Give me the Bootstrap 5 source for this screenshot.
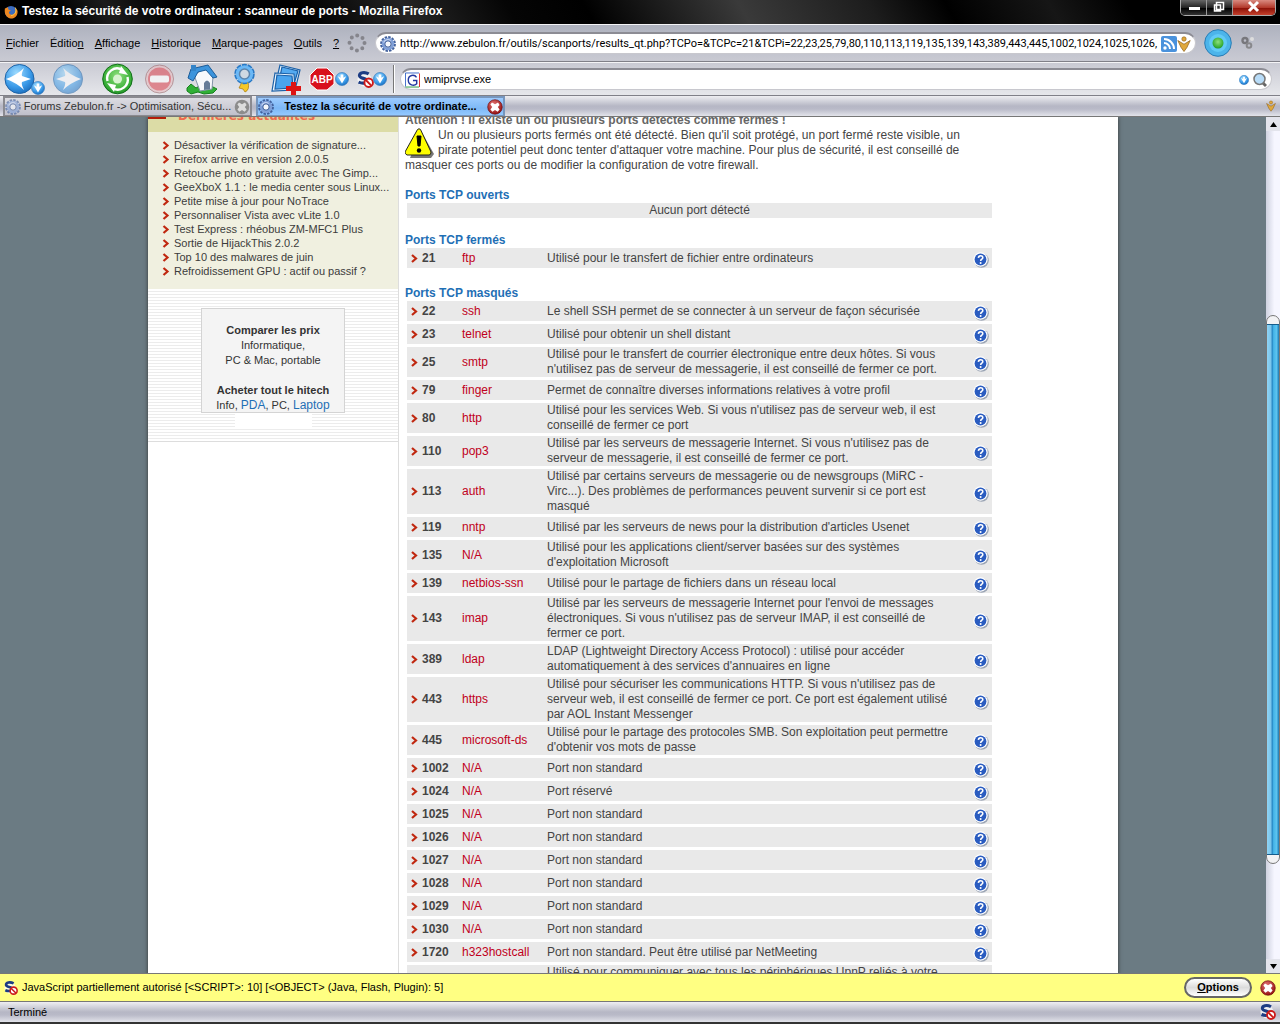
<!DOCTYPE html>
<html lang="fr">
<head>
<meta charset="utf-8">
<meta name="viewport" content="width=device-width, initial-scale=1">
<title>Testez la sécurité de votre ordinateur : scanneur de ports</title>
<link href="https://cdn.jsdelivr.net/npm/bootstrap@5.3.0/dist/css/bootstrap.min.css" rel="stylesheet">
<style>
body{font-family:"Liberation Sans",Arial,sans-serif;font-size:11px;line-height:15px;color:#000;background:#6b7b83}
a{color:inherit;text-decoration:none}
svg{flex:none;display:block}
.titlebar{height:24px;background:linear-gradient(60deg,#000 0 5%,#1c1c1c 9%,#000 14% 24%,#242424 32%,#050505 40%,#000 46%,#3a3a3a 58%,#1d1d1d 68%,#000 74%,#161616 82%,#000 88%);color:#fff;font-size:12px;font-weight:bold}
.winbtns{height:16px;border:1px solid #aaa;border-top:0;border-radius:0 0 5px 5px;overflow:hidden}
.winbtns button{border:0;border-right:1px solid #999;background:linear-gradient(#666,#222 50%,#000 55%,#333);width:26px;padding:0}
.winbtns .closer{width:42px;border:0;background:linear-gradient(#d98a80,#b33a2c 50%,#8c1208 55%,#c4402c)}
.menubar{height:38px;border-top:1px solid #f4f4f6;border-bottom:1px solid #808088;background:linear-gradient(#aeb2be,#bfc1cc 60%,#c9cad3)}
.menus{gap:11px;padding-left:6px}
.fieldbox{border-radius:11px;background:#fff;border:1px solid #c8c8ce;border-top:2px solid #8c8c94;height:22px;color:#000}
.fieldbox input{border:0;outline:0;background:transparent;min-width:0;padding:0;font-size:11px;line-height:15px;color:#000}
.fieldbox .urltext{font-family:Roboto,"Liberation Sans",sans-serif}
.toolbar{height:34px;border-top:1px solid #f4f4f6;border-bottom:1px solid #808088;background:linear-gradient(#c9cad3,#e6e7eb)}
.tabstrip{height:21px;padding-left:3px;border-bottom:1px solid #777;background:linear-gradient(#eeeef2,#b6b7c5 50%,#b9bac8 65%,#e2e3ea)}
.tabitem{height:20px;width:249px;border:2px solid #8a8a90;border-bottom-width:1px;background:linear-gradient(#dcdce2,#c0c0ca);color:#333;white-space:nowrap}
.tabitem.current{background:linear-gradient(#9ccbff,#7db8f6 60%,#93c9ff);border-color:#7796bd;color:#000;font-weight:bold}
.view{min-height:0;overflow:hidden}
.sheet{width:970px;background:#fff;box-shadow:0 0 4px #333}
.side{width:251px;border-right:1px solid #ddd}
.sidehead{height:15px;background:#dcdca6;overflow:hidden;color:#ee6a4e;font-family:"DejaVu Sans",sans-serif;font-size:12px;font-weight:bold}
.sidehead span{margin-top:-8px}
.dash{width:18px;height:6px;margin-top:-4px;background:#b41c08}
.news{background:#f0f0e0;height:157px;padding:6px 0 0 14px;color:#3c3c3c;line-height:14px}
.promo{height:153px;border-bottom:1px solid #ddd;background:repeating-linear-gradient(#fff 0 2px,#ececec 2px 3px);padding-top:19px;color:#333}
.promobox{width:144px;height:105px;background:#f4f4f4;border:1px solid #d4d4d4;padding-top:14px}
.promobox a{font-size:12px;color:#1f6fb5}
.patch{width:77px;height:15px;background:#fff}
.article{width:594px;font-size:12px;color:#444;padding-left:6px;margin-top:-4px;white-space:nowrap}
.article h2{font-size:12px;line-height:15px;font-weight:bold;color:#1f6fb5;margin:0}
.alerthead{color:#666}
.ports{width:585px;margin:0 0 0 2px;border-collapse:separate;border-spacing:0;table-layout:fixed}
.ports td{background:#e9e9e9;padding:0;height:23px;vertical-align:middle;border-bottom:3px solid #fff;background-clip:padding-box}
.ports td:nth-child(3){color:#c00020}
.ports .none td{height:15px;border:0;text-align:center}
.ports .helpmark{margin-top:4px}
.sbar{width:14px;background:linear-gradient(90deg,#cfd2e0,#f6f6ff 60%)}
.sbar button{height:14px;border:0;padding:0;background:#e3e4ec}
.thumb{border-radius:7px;border:1px solid #777;background:#f2f2f4;padding:8px 0}
.thumb div{border:1px solid #155d8c;border-width:1px 0;background:linear-gradient(90deg,#8fd4f5,#7cc6ec 30%,#2a8cc8 45%,#44b4e8 55%,#5cc4f0 80%,#1c78b0)}
.notice{height:28px;background:#ffff82;border-top:1px solid #777}
.optbtn{width:68px;height:21px;border:2px solid #666;border-radius:11px;background:linear-gradient(#fff,#dcdcdc 50%,#fff);font-size:11px;font-weight:bold;line-height:15px;padding:0}
.statusbar{height:23px;border-top:1px solid #777;border-bottom:2px solid #333;background:linear-gradient(#eeeef2,#b6b7c5 50%,#b9bac8 65%,#e2e3ea)}
</style>
<script src="https://cdn.jsdelivr.net/npm/bootstrap@5.3.0/dist/js/bootstrap.bundle.min.js"></script>
</head>
<body class="vh-100 d-flex flex-column overflow-hidden">
<svg width="0" height="0" class="position-absolute">
<defs>
<radialGradient id="blue" cx=".4" cy=".3" r=".8"><stop offset="0" stop-color="#9fdcff"/><stop offset=".6" stop-color="#3a9ae8"/><stop offset="1" stop-color="#1464b4"/></radialGradient>
<radialGradient id="green" cx=".5" cy=".4" r=".7"><stop offset="0" stop-color="#8fe07c"/><stop offset=".7" stop-color="#35ad35"/><stop offset="1" stop-color="#12761a"/></radialGradient>
<radialGradient id="red" cx=".4" cy=".3" r=".8"><stop offset="0" stop-color="#e07070"/><stop offset="1" stop-color="#8c0808"/></radialGradient>
</defs>
<symbol id="arrow" viewBox="0 0 7 9"><path d="M1 1l4 3.500-4 3.500" fill="none" stroke="#c02810" stroke-width="2.200"/></symbol>
<symbol id="help" viewBox="0 0 16 16"><circle cx="8.500" cy="8.500" r="7.300" fill="#9aa4b4"/><circle cx="7.500" cy="7.500" r="7.200" fill="#fff"/><circle cx="7.500" cy="7.500" r="5.900" fill="#2a5cc0"/><path d="M5.400 5.900c.1-2.900 4.400-2.900 4.400-.2 0 1.500-2.100 1.600-2.100 3.200" fill="none" stroke="#fff" stroke-width="1.600"/><circle cx="7.600" cy="10.900" r="1" fill="#fff"/></symbol>
<symbol id="cog" viewBox="0 0 16 16"><circle cx="8" cy="8" r="6.600" fill="none" stroke="#41609c" stroke-width="2.600" stroke-dasharray="2.400 1.056"/><circle cx="8" cy="8" r="4.800" fill="none" stroke="#7f9fd8" stroke-width="2.800"/><path d="M3.600 6.600a4.500 4.500 0 0 1 7-2" fill="none" stroke="#c4d4f2" stroke-width="1.200"/><circle cx="8" cy="8" r="3.200" fill="#f4f7fc" stroke="#365694"/></symbol>
<symbol id="down" viewBox="0 0 14 14"><circle cx="7" cy="7" r="6.500" fill="url(#blue)" stroke="#2a72b8" stroke-width=".6"/><path d="M2.800 4.200L7 11.500l4.200-7.300-2.900 1.500V2.500H5.700v3.200z" fill="#fff"/></symbol>
<symbol id="closex" viewBox="0 0 16 16"><circle cx="8" cy="8" r="7.300" fill="url(#red)" stroke="#600" stroke-width=".6"/><path d="M5 3.500L8 5.300 11 3.500 12.600 6 10.800 8l1.800 2.500-2 2.300L8 11l-2.600 1.800-2-2.300L5.200 8 3.400 5.600z" fill="#fff"/></symbol>
<symbol id="closeg" viewBox="0 0 16 16"><circle cx="8" cy="8" r="7.300" fill="#8c8c8c"/><path d="M5 3.500L8 5.300 11 3.500 12.600 6 10.800 8l1.800 2.500-2 2.300L8 11l-2.600 1.800-2-2.300L5.200 8 3.400 5.600z" fill="#ddd"/></symbol>
<symbol id="noscript" viewBox="0 0 16 16"><circle cx="7" cy="8" r="6.500" fill="#fff" opacity=".7"/><path d="M11 2.800C7 .5 2 1.500 2.400 4.600 2.800 7.600 9.600 6.300 9.300 9.400 9 11.700 5 12 1.500 10.500" fill="none" stroke="#1c3c84" stroke-width="3"/><circle cx="11" cy="11" r="4" fill="#fff" stroke="#cc1a1a" stroke-width="1.800"/><path d="M8.300 8.500l5.200 5.200" stroke="#cc1a1a" stroke-width="1.800"/></symbol>
<symbol id="figure" viewBox="0 0 14 16"><circle cx="7" cy="3" r="2.200" fill="#e0a83c" stroke="#8c5c14" stroke-width=".6"/><path d="M.8 4.500L7 8.200l6.200-3.700-3.300 7L7 15.500l-2.900-4z" fill="#e0a83c" stroke="#8c5c14" stroke-width=".7"/></symbol>
</svg>

<header>
<div class="titlebar d-flex align-items-start">
<svg class="ms-1 mt-1" width="14" height="16" viewBox="0 0 16 16"><circle cx="8" cy="8" r="7" fill="#3c6cc0"/><path d="M1 4C0 10 3 15 8 15.500c5 0 8-4 7.500-9L13 3c1 5-1 8-4.500 8C6 11 5 9 6 7.500L8 6.500 5 5 4.500 2.500z" fill="#ee8820"/><path d="M13 3c2 5-1 9-5 9" fill="none" stroke="#ffd24a"/></svg>
<span class="flex-grow-1 pt-1 ps-1">Testez la sécurité de votre ordinateur : scanneur de ports - Mozilla Firefox</span>
<div class="winbtns d-flex me-1">
<button type="button" aria-label="Réduire"><svg width="24" height="15"><path d="M8 8.500h11" stroke="#fff" stroke-width="3"/></svg></button>
<button type="button" aria-label="Restaurer"><svg width="24" height="15"><path d="M9.500 2.500h7v7h-7z M7.500 5h6v6h-6z" fill="#333" stroke="#fff" stroke-width="1.500"/></svg></button>
<button type="button" class="closer" aria-label="Fermer"><svg width="40" height="15"><path d="M16 2l9 9m0-9l-9 9" stroke="#fff" stroke-width="3"/></svg></button>
</div>
</div>
<div class="menubar d-flex align-items-center">
<nav class="menus d-flex me-1">
<a href="#"><u>F</u>ichier</a><a href="#">Éditio<u>n</u></a><a href="#"><u>A</u>ffichage</a><a href="#"><u>H</u>istorique</a><a href="#"><u>M</u>arque-pages</a><a href="#"><u>O</u>utils</a><a href="#"><u>?</u></a>
</nav>
<svg class="ms-1 me-2" width="20" height="20" viewBox="0 0 20 20"><circle cx="10" cy="10" r="7.500" fill="none" stroke="#85858c" stroke-width="4" stroke-linecap="round" stroke-dasharray="0 5.890"/></svg>
<div class="fieldbox d-flex align-items-center flex-grow-1 ps-1 pe-1">
<svg class="me-1" width="16" height="16"><use href="#cog"/></svg>
<input class="urltext flex-grow-1" aria-label="Adresse" value="http://www.zebulon.fr/outils/scanports/results_qt.php?TCPo=&amp;TCPc=21&amp;TCPi=22,23,25,79,80,110,113,119,135,139,143,389,443,445,1002,1024,1025,1026,">
<svg width="16" height="16"><rect width="16" height="16" rx="2" fill="#4a92dc"/><circle cx="4" cy="12" r="1.700" fill="#fff"/><path d="M3 7a6 6 0 0 1 6 6M3 3a10 10 0 0 1 10 10" fill="none" stroke="#fff" stroke-width="2"/></svg>
<svg width="14" height="16"><use href="#figure"/></svg>
</div>
<svg class="ms-2" width="28" height="28" viewBox="0 0 28 28"><circle cx="14" cy="14" r="13.300" fill="#4cb4ea" stroke="#2a7cb4"/><circle cx="14" cy="14" r="9" fill="#62caf6"/><circle cx="14" cy="14" r="5.500" fill="url(#green)"/></svg>
<svg class="ms-2 me-4" width="16" height="16"><circle cx="5" cy="5.500" r="2.500" fill="none" stroke="#77777c" stroke-width="2.400"/><circle cx="9" cy="10.500" r="2.300" fill="none" stroke="#88888c" stroke-width="2"/><circle cx="12" cy="4" r="2" fill="#ddd"/></svg>
</div>
<div class="toolbar d-flex align-items-center">
<svg width="396" height="32" viewBox="0 0 396 32">
<circle cx="19.500" cy="16" r="14.500" fill="url(#blue)" stroke="#1e64a8"/><path d="M6 16Q17 12 24 5 21 11 22 13L31 16 22 19q-1 2 2 8Q17 20 6 16z" fill="#fff"/>
<svg x="31" y="18" width="14" height="14"><use href="#down"/></svg>
<g opacity=".55"><circle cx="68" cy="16" r="14.500" fill="url(#blue)" stroke="#1e64a8"/><path d="M81 16Q70 12 63 5q3 6 2 8l-9 3 9 3q1 2-2 8 7-7 18-11z" fill="#fff"/></g>
<circle cx="117.500" cy="16" r="14.800" fill="url(#green)" stroke="#12701a"/><path d="M107.500 18a10 10 0 0 1 15-11M127.500 14a10 10 0 0 1-15 11" fill="none" stroke="#fff" stroke-width="2.400"/><path d="M121 3l7 9-9-2zM114 29l-7-9 9 2z" fill="#fff"/><circle cx="117.500" cy="16" r="4.500" fill="#d8f4d0"/>
<g opacity=".65"><circle cx="159.500" cy="16" r="14" fill="#e8c0c4" stroke="#a07074"/><circle cx="159.500" cy="16" r="11.500" fill="#dd5862"/><rect x="150" y="12.500" width="19" height="7" rx="2" fill="#fff"/></g>
<path d="M187 25l4-4 5 4 5-3 5 3 5-2 6 3-4 4-9 1-6-2-7 2-4-3z" fill="#30b036" stroke="#18801e"/>
<path d="M194 12l6 16 12-2 1-13-7-9z" fill="#f6f8fb" stroke="#8494a8"/><path d="M188 15l3-9 17-4 9 12-4 1-7-8-8 2-5 9z" fill="#3c94dc" stroke="#1c5c98"/><path d="M191 2h5v6h-5z" fill="#3484c8"/><path d="M204 27v-7q3-5 6 0v6z" fill="#667c98"/>
<path d="M242 19l-3 6 4 1 2 3q5-2 3-10z" fill="#f4c828" stroke="#a87808" stroke-width=".7"/><circle cx="244.500" cy="11" r="8.500" fill="#58aef4" stroke="#2878c4" stroke-width="3.500" stroke-dasharray="4.500 .84"/><circle cx="244.500" cy="11" r="8.700" fill="#6ab8f6"/><circle cx="244.500" cy="11" r="5" fill="#cfd8e2" stroke="#5c84ac" stroke-width="1.500"/>
<g stroke="#1a60a8" stroke-width="1.200"><path d="M280 2l20 5-4 16-20-4z" fill="#e8f4fd"/><path d="M282 4l16 4-4 13-15-3z" fill="#54aaf0"/><path d="M275 10l19 1 1 16-23 1z" fill="#e8f4fd"/><path d="M277 12l15 1 1 12-18 1z" fill="#4aa4ee"/></g>
<path d="M291 19h5v4h5v5h-5v4h-5v-4h-5v-5h5z" fill="#dd1414"/>
<path d="M317 5h10l7 7v9l-7 6h-10l-7-6v-9z" fill="#d8101c" stroke="#fff"/><text x="322" y="20" text-anchor="middle" font-size="10" font-weight="bold" fill="#fff">ABP</text>
<svg x="335" y="9" width="14" height="14"><use href="#down"/></svg>
<svg x="357" y="8" width="17" height="17"><use href="#noscript"/></svg>
<svg x="373" y="9" width="14" height="14"><use href="#down"/></svg>
<path d="M393.500 2v28" stroke="#777"/><path d="M394.500 2v28" stroke="#fff"/>
</svg>
<div class="fieldbox d-flex align-items-center flex-grow-1 me-2 ps-1 pe-1 ms-1">
<svg class="me-1" width="15" height="16" viewBox="0 0 16 16"><path d="M.500 15V.500H15" fill="none" stroke="#3a68c8"/><path d="M15.500 1v14.500" stroke="#d22"/><path d="M.500 15.500H15" stroke="#2a9a40"/><path d="M12.300 5.200C10 1.500 3.500 2.500 3.500 8s6 7 9 4V8.500H8.500" fill="none" stroke="#2238a0" stroke-width="1.500"/></svg>
<input class="flex-grow-1" aria-label="Recherche" value="wmiprvse.exe">
<svg width="10" height="10"><use href="#down"/></svg>
<svg class="ms-1" width="14" height="16" viewBox="0 0 14 16"><path d="M9 10l4 4" stroke="#666" stroke-width="3"/><circle cx="6.500" cy="7" r="5.500" fill="#b8dcf8" stroke="#777" stroke-width="1.500"/></svg>
</div>
</div>
<div class="tabstrip d-flex justify-content-between align-items-center">
<div class="d-flex gap-1">
<div class="tabitem d-flex align-items-center justify-content-between"><svg width="16" height="16" opacity=".6"><use href="#cog"/></svg><a href="#">Forums Zebulon.fr -&gt; Optimisation, Sécu...</a><svg width="16" height="16"><use href="#closeg"/></svg></div>
<div class="tabitem current d-flex align-items-center justify-content-between"><svg width="16" height="16"><use href="#cog"/></svg><a href="#">Testez la sécurité de votre ordinate...</a><svg width="16" height="16"><use href="#closex"/></svg></div>
</div>
<svg class="me-1" width="10" height="12" viewBox="0 0 14 16"><use href="#figure"/></svg>
</div>
</header>

<div class="view flex-grow-1 d-flex">
<div class="flex-grow-1 overflow-hidden">
<div class="sheet mx-auto d-flex">
<aside class="side flex-shrink-0">
<div class="sidehead d-flex"><div class="dash me-2"></div><span class="ms-1">Dernières actualités</span></div>
<div class="news">
<div class="d-flex align-items-center"><svg class="me-1" width="8" height="9"><use href="#arrow"/></svg><a href="#">Désactiver la vérification de signature...</a></div>
<div class="d-flex align-items-center"><svg class="me-1" width="8" height="9"><use href="#arrow"/></svg><a href="#">Firefox arrive en version 2.0.0.5</a></div>
<div class="d-flex align-items-center"><svg class="me-1" width="8" height="9"><use href="#arrow"/></svg><a href="#">Retouche photo gratuite avec The Gimp...</a></div>
<div class="d-flex align-items-center"><svg class="me-1" width="8" height="9"><use href="#arrow"/></svg><a href="#">GeeXboX 1.1 : le media center sous Linux...</a></div>
<div class="d-flex align-items-center"><svg class="me-1" width="8" height="9"><use href="#arrow"/></svg><a href="#">Petite mise à jour pour NoTrace</a></div>
<div class="d-flex align-items-center"><svg class="me-1" width="8" height="9"><use href="#arrow"/></svg><a href="#">Personnaliser Vista avec vLite 1.0</a></div>
<div class="d-flex align-items-center"><svg class="me-1" width="8" height="9"><use href="#arrow"/></svg><a href="#">Test Express : rhéobus ZM-MFC1 Plus</a></div>
<div class="d-flex align-items-center"><svg class="me-1" width="8" height="9"><use href="#arrow"/></svg><a href="#">Sortie de HijackThis 2.0.2</a></div>
<div class="d-flex align-items-center"><svg class="me-1" width="8" height="9"><use href="#arrow"/></svg><a href="#">Top 10 des malwares de juin</a></div>
<div class="d-flex align-items-center"><svg class="me-1" width="8" height="9"><use href="#arrow"/></svg><a href="#">Refroidissement GPU : actif ou passif ?</a></div>
</div>
<div class="promo">
<div class="promobox mx-auto text-center"><b>Comparer les prix</b><br>Informatique,<br>PC &amp; Mac, portable<br><br><b>Acheter tout le hitech</b><br>Info, <a href="#">PDA</a>, PC, <a href="#">Laptop</a></div>
<div class="patch mx-auto"></div>
</div>
</aside>
<main class="article">
<b class="alerthead">Attention ! Il existe un ou plusieurs ports détectés comme fermés !</b>
<div><svg class="float-start me-1" width="29" height="30" viewBox="0 0 29 30"><path d="M16 3l13 23-3 4H5z" fill="#777"/><path d="M12.500 1.500q1.500-1.500 3 0L26 24q0 3-2 3H2q-2-1-2-3z" fill="#ff0" stroke="#222"/><path d="M12 8h4l-1 10h-2z" stroke="#000" stroke-linejoin="round"/><circle cx="14" cy="22.500" r="2.200"/></svg>Un ou plusieurs ports fermés ont été détecté. Bien qu'il soit protégé, un port fermé reste visible, un<br>pirate potentiel peut donc tenter d'attaquer votre machine. Pour plus de sécurité, il est conseillé de<br>masquer ces ports ou de modifier la configuration de votre firewall.</div>
<br>
<h2>Ports TCP ouverts</h2>
<table class="ports"><tbody><tr class="none"><td>Aucun port détecté</td></tr></tbody></table>
<br>
<h2>Ports TCP fermés</h2>
<table class="ports"><colgroup><col style="width:15px"><col style="width:40px"><col style="width:85px"><col><col style="width:19px"></colgroup><tbody>
<tr><td><svg class="ms-1" width="7" height="9"><use href="#arrow"/></svg></td><td><b>21</b></td><td>ftp</td><td>Utilisé pour le transfert de fichier entre ordinateurs</td><td><svg class="helpmark" width="16" height="16"><use href="#help"/></svg></td></tr>
</tbody></table>
<br>
<h2>Ports TCP masqués</h2>
<table class="ports" id="masked"><colgroup><col style="width:15px"><col style="width:40px"><col style="width:85px"><col><col style="width:19px"></colgroup><tbody></tbody></table>
</main>
</div>
</div>
<div class="sbar d-flex flex-column">
<button type="button" aria-label="Haut"><svg class="mx-auto" width="9" height="9"><path d="M1 7l3.500-5L8 7z"/></svg></button>
<div style="flex:184"></div>
<div class="thumb d-flex" style="flex:532"><div class="w-100"></div></div>
<div style="flex:95"></div>
<button type="button" aria-label="Bas"><svg class="mx-auto" width="9" height="9"><path d="M1 2l3.500 5L8 2z"/></svg></button>
</div>
</div>

<div class="notice d-flex align-items-center flex-shrink-0">
<svg class="ms-1 me-1" width="14" height="16"><use href="#noscript"/></svg><span class="flex-grow-1">JavaScript partiellement autorisé [&lt;SCRIPT&gt;: 10] [&lt;OBJECT&gt; (Java, Flash, Plugin): 5]</span>
<button type="button" class="optbtn me-2"><u>O</u>ptions</button><svg class="me-1" width="16" height="16"><use href="#closex"/></svg>
</div>
<footer class="statusbar d-flex align-items-center justify-content-between flex-shrink-0 ps-2 pe-1"><span>Terminé</span><svg width="16" height="16"><use href="#noscript"/></svg></footer>

<script>
const ports = [
['22','ssh','Le shell SSH permet de se connecter à un serveur de façon sécurisée'],
['23','telnet','Utilisé pour obtenir un shell distant'],
['25','smtp',"Utilisé pour le transfert de courrier électronique entre deux hôtes. Si vous<br>n'utilisez pas de serveur de messagerie, il est conseillé de fermer ce port."],
['79','finger','Permet de connaître diverses informations relatives à votre profil'],
['80','http',"Utilisé pour les services Web. Si vous n'utilisez pas de serveur web, il est<br>conseillé de fermer ce port"],
['110','pop3',"Utilisé par les serveurs de messagerie Internet. Si vous n'utilisez pas de<br>serveur de messagerie, il est conseillé de fermer ce port."],
['113','auth','Utilisé par certains serveurs de messagerie ou de newsgroups (MiRC -<br>Virc...). Des problèmes de performances peuvent survenir si ce port est<br>masqué'],
['119','nntp',"Utilisé par les serveurs de news pour la distribution d'articles Usenet"],
['135','N/A',"Utilisé pour les applications client/server basées sur des systèmes<br>d'exploitation Microsoft"],
['139','netbios-ssn','Utilisé pour le partage de fichiers dans un réseau local'],
['143','imap',"Utilisé par les serveurs de messagerie Internet pour l'envoi de messages<br>électroniques. Si vous n'utilisez pas de serveur IMAP, il est conseillé de<br>fermer ce port."],
['389','ldap',"LDAP (Lightweight Directory Access Protocol) : utilisé pour accéder<br>automatiquement à des services d'annuaires en ligne"],
['443','https',"Utilisé pour sécuriser les communications HTTP. Si vous n'utilisez pas de<br>serveur web, il est conseillé de fermer ce port. Ce port est également utilisé<br>par AOL Instant Messenger"],
['445','microsoft-ds',"Utilisé pour le partage des protocoles SMB. Son exploitation peut permettre<br>d'obtenir vos mots de passe"],
['1002','N/A','Port non standard'],
['1024','N/A','Port réservé'],
['1025','N/A','Port non standard'],
['1026','N/A','Port non standard'],
['1027','N/A','Port non standard'],
['1028','N/A','Port non standard'],
['1029','N/A','Port non standard'],
['1030','N/A','Port non standard'],
['1720','h323hostcall','Port non standard. Peut être utilisé par NetMeeting'],
['','','Utilisé pour communiquer avec tous les périphériques UpnP reliés à votre']
];
document.querySelector('#masked tbody').innerHTML = ports.map(p =>
`<tr><td><svg class="ms-1" width="7" height="9"><use href="#arrow"/></svg></td><td><b>${p[0]}</b></td><td>${p[1]}</td><td>${p[2]}</td><td><svg class="helpmark" width="16" height="16"><use href="#help"/></svg></td></tr>`).join('');
document.querySelector('#masked tbody tr:last-child').innerHTML = '<td></td><td></td><td></td><td class="align-top">' + ports[ports.length - 1][2] + '</td><td></td>';
</script>
</body>
</html>
